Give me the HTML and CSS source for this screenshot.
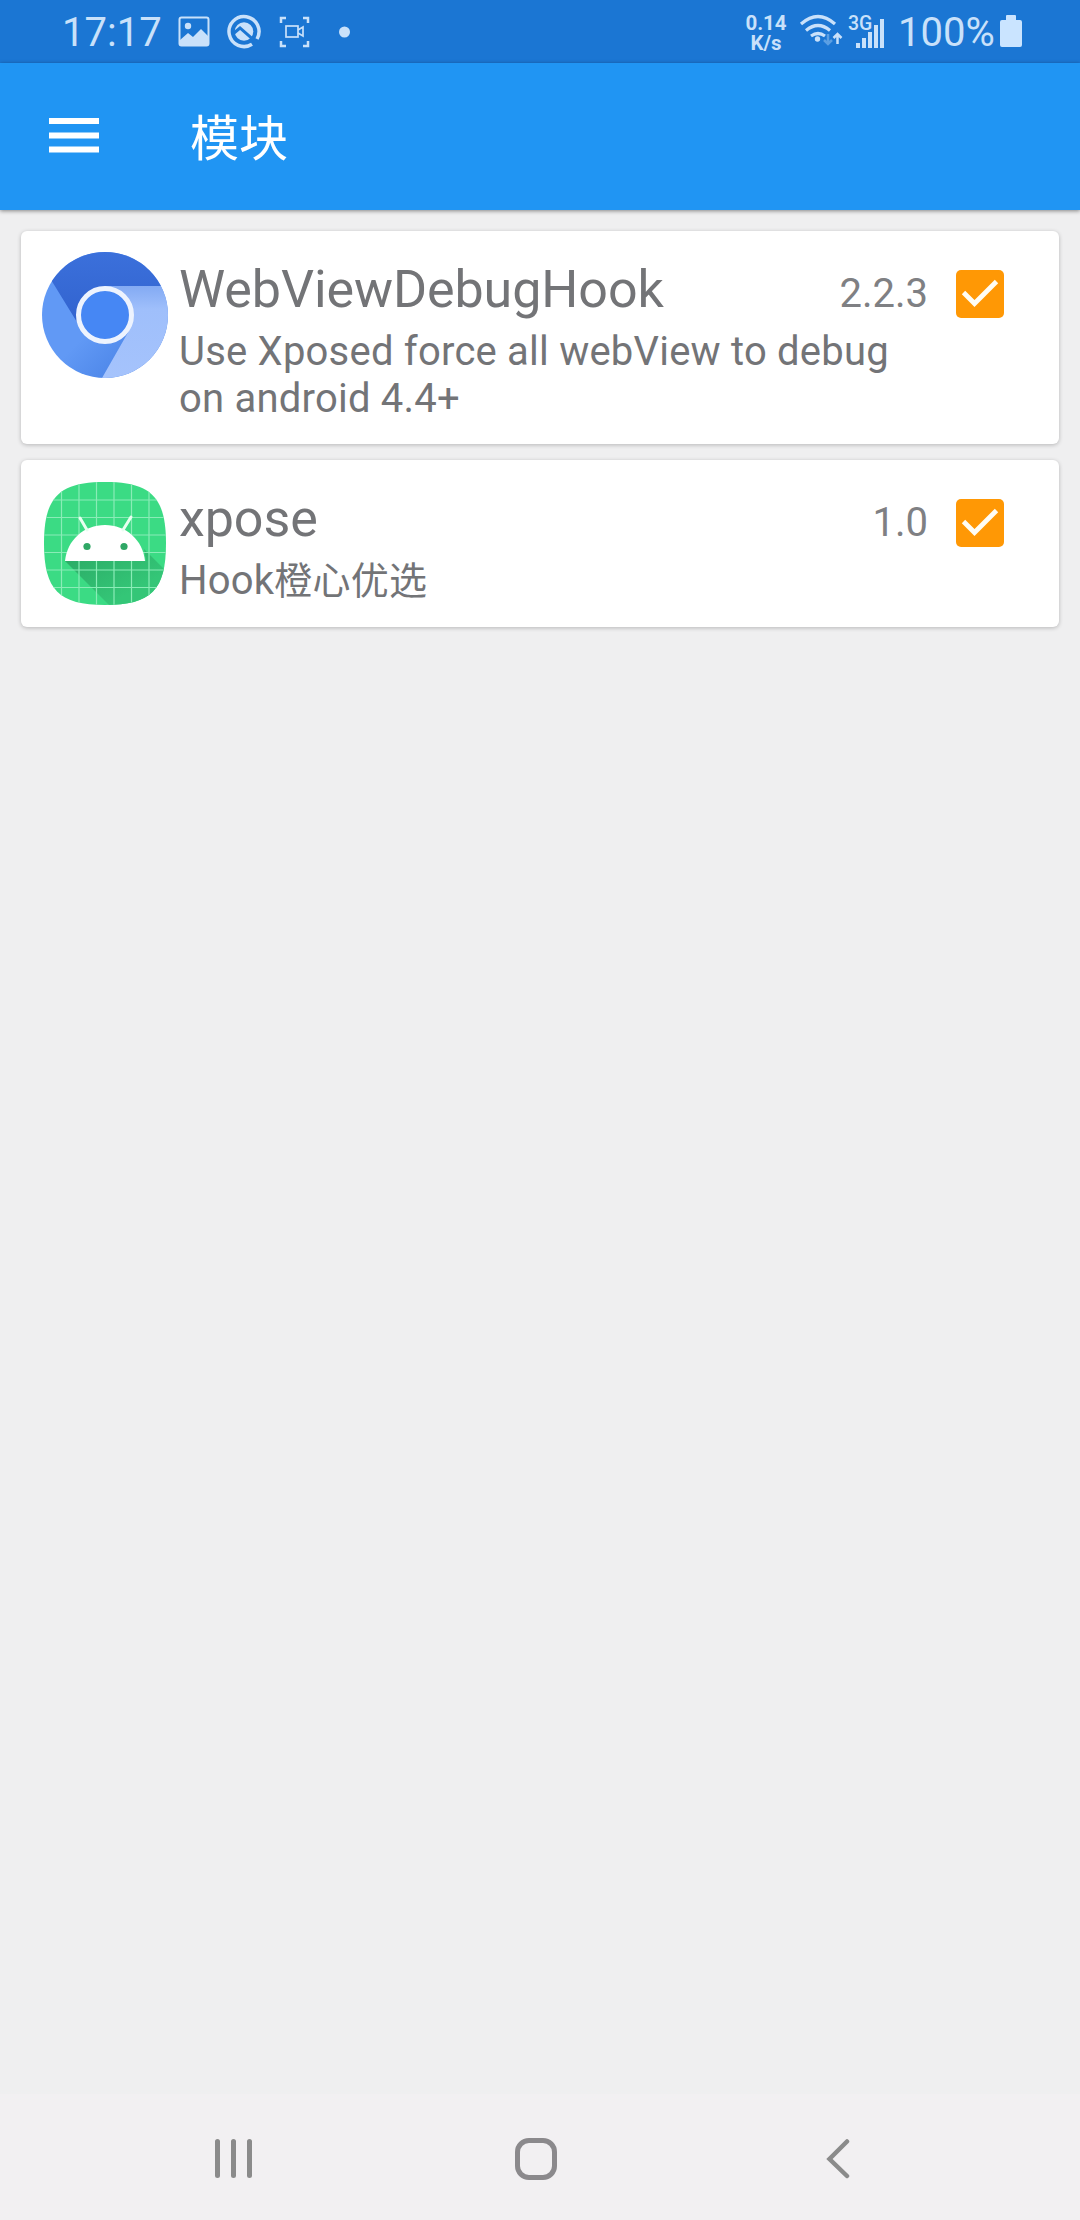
FILE: index.html
```html
<!DOCTYPE html>
<html lang="zh-CN">
<head>
<meta charset="utf-8">
<title>模块</title>
<link rel="stylesheet" href="styles.css">
</head>
<body>
<div class="screen">
  <header class="status">
    <span class="clock">17:17</span>
    <svg class="notices" width="180" height="62" viewBox="170 0 180 62" fill="none" stroke="#c9e1fa">
      <rect x="179.5" y="17.5" width="29" height="28" rx="2" stroke-width="2"/>
      <circle cx="188" cy="26" r="3.2" fill="#c9e1fa" stroke="none"/>
      <path d="M180 40l8-7 5 4 8-8 8 8v8h-29z" fill="#c9e1fa" stroke="none"/>
      <path d="M252 44.200A15 15 0 1 1 257 39" stroke-width="3.500"/>
      <circle cx="244" cy="31.500" r="9.300" fill="#c9e1fa" stroke="none"/>
      <path d="M234 33l6-5 17 15" stroke="#1b76d3" stroke-width="3"/>
      <path d="M281 23v-5h5M303 18h5v5M281 41v5h5M303 46h5v-5" stroke-width="2.500"/>
      <rect x="286" y="26" width="12" height="11" stroke-width="1.700"/>
      <path d="M298 30l5-3v9l-5-3" stroke-width="1.700"/>
      <circle cx="344.500" cy="32" r="5.500" fill="#c9e1fa" stroke="none"/>
    </svg>
    <span class="speed">0.14<br>K/s</span>
    <svg class="wifi" width="44" height="62" viewBox="799 0 44 62" fill="none" stroke="#c9e1fa" stroke-width="3.200">
      <path d="M801 24q17-15 34 0M806 30.500q12-10 24 0M811 36q7-5 14 0"/>
      <circle cx="817.500" cy="39" r="2.700" fill="#c9e1fa" stroke="none"/>
      <path d="M828 34v10M824 40l4 4 4-4" stroke="#5b9fe3" stroke-width="2.500"/>
      <path d="M837.500 44V34M833.500 38l4-4 4 4" stroke-width="2.500"/>
    </svg>
    <div class="mobile">
      <span class="network">3G</span>
      <svg width="30" height="31" viewBox="0 0 30 31" fill="#c9e1fa">
        <path d="M0 25h4v5H0zM6 20h4v10H6zM12 14h4v16h-4zM18 7h4v23h-4zM24 1h4v29h-4z"/>
      </svg>
    </div>
    <span class="charge">100%</span>
    <svg class="battery" width="22" height="33" viewBox="0 0 22 33" fill="#cae4ff">
      <path d="M6 1q0-1 1-1h8q1 0 1 1v4h4q2 0 2 2v23q0 2-2 2H2q-2 0-2-2V7q0-2 2-2h4z"/>
    </svg>
  </header>
  <div class="toolbar">
    <svg class="menu" width="50" height="36" viewBox="0 0 50 36" fill="#fff">
      <path d="M0 0h50v6H0zM0 14.500h50v6H0zM0 28.500h50v6H0z"/>
    </svg>
    <h1>模块</h1>
  </div>
  <main class="list">
    <article class="card">
      <svg class="app-icon" width="126" height="126" viewBox="0 0 126 126">
        <defs>
          <clipPath id="disc"><circle cx="63" cy="63" r="63"/></clipPath>
          <linearGradient id="topShade" x1="0" y1="0" x2="0" y2="1"><stop offset="0" stop-color="#3b70db"/><stop offset="1" stop-color="#3162ce"/></linearGradient>
          <linearGradient id="rightShade" x1="0" y1="0" x2="0" y2="1"><stop offset="0" stop-color="#83aaf3"/><stop offset=".25" stop-color="#9fbffb"/><stop offset="1" stop-color="#a5c3fc"/></linearGradient>
          <linearGradient id="leftShade" x1="0" y1="0" x2="1" y2="1"><stop offset=".5" stop-color="#6199f5"/><stop offset="1" stop-color="#3e78df"/></linearGradient>
        </defs>
        <g clip-path="url(#disc)">
          <path d="M0 0h126v126H0z" fill="url(#leftShade)"/>
          <path d="M-10 0h136v34H63L38 75 11 31z" fill="url(#topShade)"/>
          <path d="M63 34h63v92H60l28-49z" fill="url(#rightShade)"/>
        </g>
        <circle cx="63" cy="63" r="26.500" fill="#4687f4" stroke="#edf3fe" stroke-width="5"/>
      </svg>
      <div class="info">
        <h2>WebViewDebugHook</h2>
        <p>Use Xposed force all webView to debug<br>on android 4.4+</p>
      </div>
      <span class="version">2.2.3</span>
      <svg class="check" width="48" height="48" viewBox="0 0 48 48">
        <rect width="48" height="48" rx="5" fill="#ff9805"/>
        <path d="M7.500 22.500l11 11L40.500 11.500" fill="none" stroke="#fffdf5" stroke-width="4.800"/>
      </svg>
    </article>
    <article class="card">
      <svg class="app-icon" width="126" height="126" viewBox="0 1 126 126">
        <defs>
          <clipPath id="squircle"><path d="M63 2C109 2 124 17 124 63.500S109 125 63 125 2 110 2 63.500 17 2 63 2z"/></clipPath>
          <linearGradient id="cast" x1="0" y1="0" x2="1" y2="1"><stop offset="0" stop-color="#2aa864"/><stop offset=".7" stop-color="#34c677"/></linearGradient>
        </defs>
        <g clip-path="url(#squircle)">
          <path d="M0 0h126v126H0z" fill="#3bdb84"/>
          <path d="M23 81h81l-2-12 24 24v33H68z" fill="url(#cast)"/>
          <path d="M19.500 0v126M37 0v126M54.500 0v126M72 0v126M89.500 0v126M107 0v126M0 20h126M0 37.500h126M0 55h126M0 72.500h126M0 90h126M0 107.500h126" stroke="#8aecb7" stroke-width="1.200"/>
        </g>
        <path d="M23 81C25 60 42 45 63 45s38 15 40 36z" fill="#fff"/>
        <path d="M38 38l7 12M89 37l-8 13" stroke="#e7fff0" stroke-width="3" stroke-linecap="round"/>
        <circle cx="45" cy="66.500" r="3.600" fill="#2fa765"/>
        <circle cx="82" cy="66.500" r="3.600" fill="#2fa765"/>
      </svg>
      <div class="info">
        <h2>xpose</h2>
        <p>Hook<span class="han">橙心优选</span></p>
      </div>
      <span class="version">1.0</span>
      <svg class="check" width="48" height="48" viewBox="0 0 48 48">
        <rect width="48" height="48" rx="5" fill="#ff9805"/>
        <path d="M7.500 22.500l11 11L40.500 11.500" fill="none" stroke="#fffdf5" stroke-width="4.800"/>
      </svg>
    </article>
  </main>
  <nav class="navbar">
    <svg width="40" height="42" viewBox="0 0 40 42" fill="none" stroke="#8b8b8b" stroke-width="5" stroke-linecap="round"><path d="M4.500 3.500v34M20.500 3.500v34M36.500 3.500v34"/></svg>
    <svg class="home" width="42" height="42" viewBox="0 0 42 42" fill="none" stroke="#8b898c" stroke-width="5"><rect x="2.500" y="2.500" width="37" height="37" rx="11.500"/></svg>
    <svg width="24" height="42" viewBox="0 0 24 42" fill="none" stroke="#8b8b8b" stroke-width="4.500" stroke-linecap="round"><path d="M21 3.500L3.500 21 21 38"/></svg>
  </nav>
</div>
</body>
</html>
```
FILE: styles.css
```css
* { box-sizing: border-box; }
body {
  margin: 0;
  font-family: Roboto, "Noto Sans CJK SC", sans-serif;
  color: #737477;
}
svg { display: block; flex: none; }
h1, h2, p { margin: 0; font-weight: 400; }
.screen {
  width: 1080px;
  height: 2220px;
  display: flex;
  flex-direction: column;
  background: #efeff0;
}
.status {
  height: 63px;
  display: flex;
  flex: none;
  background: #1b76d3;
  color: #c9e1fa;
  white-space: nowrap;
}
.clock {
  width: 108px;
  margin-left: 62px;
  font-size: 40px;
  line-height: 66px;
}
.speed {
  width: 54px;
  margin: 13px 0 0 389px;
  font-size: 20.5px;
  line-height: 20px;
  font-weight: 700;
  text-align: center;
}
.wifi { margin-left: 6px; margin-right: 4px; }
.mobile {
  width: 48px;
  display: grid;
  align-content: start;
  margin-top: 15px;
}
.network {
  grid-area: 1 / 1;
  font-size: 19.5px;
  line-height: 18px;
  font-weight: 500;
  padding-left: 1px;
}
.mobile svg { grid-area: 1 / 1; margin: 3px 0 0 9px; }
.charge { font-size: 40px; line-height: 66px; width: 102px; padding-left: 3px; }
.battery { margin-top: 15px; margin-left: 3px; }
.toolbar {
  height: 147px;
  flex: none;
  display: flex;
  background: #2095f3;
  color: #fff;
  box-shadow: 0 1px 4px rgba(0, 0, 0, .45);
}
.menu { margin: 55px 0 0 49px; }
.toolbar h1 { margin: 41px 0 0 91px; font-size: 49px; line-height: 72px; }
.list {
  flex: 1;
  padding: 21px;
  display: flex;
  flex-direction: column;
  gap: 16px;
}
.card {
  height: 213px;
  display: flex;
  padding: 21px 55px 0 21px;
  background: #fff;
  border-radius: 6px;
  box-shadow: 0 1px 4px rgba(0, 0, 0, .24);
}
.card + .card { height: 167px; }
.info { flex: 1; min-width: 0; padding: 7px 0 0 11px; white-space: nowrap; }
.info h2 { font-size: 52px; line-height: 61px; letter-spacing: -.08px; }
.info p { margin-top: 8px; font-size: 40px; line-height: 47px; letter-spacing: .22px; }
.han { font-size: 38px; }
.version { font-size: 40px; line-height: 47px; margin-top: 18px; color: #7f8083; }
.check { margin: 18px 0 0 28px; }
.navbar {
  height: 126px;
  flex: none;
  display: flex;
  padding: 44px 230px 0 213px;
  justify-content: space-between;
  background: #f2f0f2;
}
.home { margin-right: 7px; }
```
